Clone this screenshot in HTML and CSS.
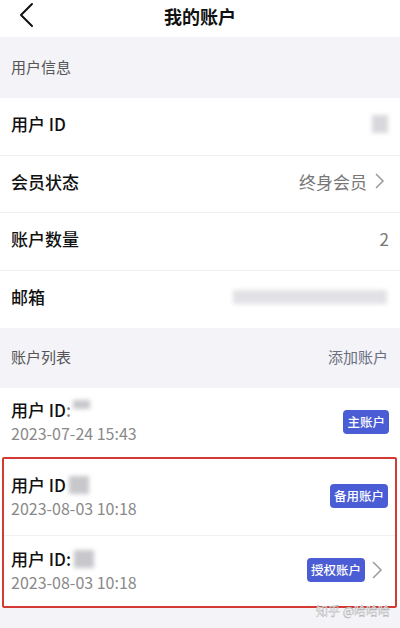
FILE: index.html
```html
<!DOCTYPE html>
<html lang="zh-CN">
<head>
  <meta charset="UTF-8" />
  <meta name="viewport" content="width=device-width, initial-scale=1.0"/>
  <title>我的账户</title>
  <link rel="stylesheet" href="styles.css">
</head>
<body>

  <!-- Top Bar -->
  <div class="top-bar">
    <svg class="back" width="16" height="26" viewBox="0 0 16 26">
      <polyline points="13,2 2,13 13,24" fill="none" stroke="#111" stroke-width="2" stroke-linecap="round" stroke-linejoin="round"/>
    </svg>
    <h3>我的账户</h3>
  </div>

  <!-- User Info -->
  <div class="section-head">用户信息</div>
  <div class="group">
    <div class="row">
      <span class="label">用户 ID</span>
      <span class="blur blur-id"></span>
    </div>
    <div class="row">
      <span class="label">会员状态</span>
      <span class="value">终身会员<svg class="arrow" width="11" height="18" viewBox="0 0 11 18"><polyline points="2,2 9,9 2,16" fill="none" stroke="#999" stroke-width="1.5"/></svg></span>
    </div>
    <div class="row">
      <span class="label">账户数量</span>
      <span class="value">2</span>
    </div>
    <div class="row last">
      <span class="label">邮箱</span>
      <span class="blur blur-mail"></span>
    </div>
  </div>

  <!-- Account List -->
  <div class="section-head list-head">
    <span>账户列表</span>
    <span class="add">添加账户</span>
  </div>
  <div class="group">
    <div class="account first">
      <div class="info">
        <div class="name">用户 ID<span class="colon">:</span><span class="blur blur-small"></span></div>
        <div class="date">2023-07-24 15:43</div>
      </div>
      <span class="badge">主账户</span>
    </div>
    <div class="marked">
      <div class="account">
        <div class="info">
          <div class="name">用户 ID<span class="blur blur-square"></span></div>
          <div class="date">2023-08-03 10:18</div>
        </div>
        <span class="badge">备用账户</span>
      </div>
      <div class="account last">
        <div class="info">
          <div class="name">用户 ID:<span class="blur blur-square"></span></div>
          <div class="date">2023-08-03 10:18</div>
        </div>
        <span class="badge">授权账户</span>
        <svg class="arrow" width="12" height="20" viewBox="0 0 12 20"><polyline points="2,2 10,10 2,18" fill="none" stroke="#999" stroke-width="1.5"/></svg>
      </div>
    </div>
  </div>

  <div class="watermark">知乎 @哈哈哈</div>

</body>
</html>
```

FILE: styles.css
```css
* {
  margin: 0;
  padding: 0;
  box-sizing: border-box;
}

body, html {
  height: 100%;
  font-family: 'Noto Sans CJK SC', 'Noto Sans', sans-serif;
}

body {
  background: #f3f3f8;
  color: #111;
  overflow: hidden;
}

/* Top Bar */
.top-bar {
  height: 37px;
  background: #fff;
  position: relative;
  display: flex;
  justify-content: center;
  align-items: center;
}

.top-bar h3 {
  font-size: 18px;
  font-weight: 700;
  margin-top: -6px;
}

.back {
  position: absolute;
  left: 19px;
  top: 2px;
}

/* Section Headers */
.section-head {
  height: 61px;
  padding: 0 12px 3px 11px;
  display: flex;
  justify-content: space-between;
  align-items: center;
  font-size: 15px;
  color: #555;
}

.list-head {
  height: 60px;
}

.section-head .add {
  color: #6a6f80;
}

.group {
  background: #fff;
}

/* Info Rows */
.row {
  height: 57.5px;
  padding: 0 11px 5px 11px;
  display: flex;
  justify-content: space-between;
  align-items: center;
  border-bottom: 1px solid #f0f0f3;
}

.row.last {
  border-bottom: none;
}

.label {
  font-size: 17px;
  font-weight: 500;
}

.value {
  font-size: 17px;
  color: #777;
  display: flex;
  align-items: center;
}

.value .arrow {
  margin-left: 7px;
  margin-right: 4px;
}

/* Blurred data */
.blur {
  display: inline-block;
  background: #c8c8cc;
  filter: blur(2px);
}

.blur-id {
  width: 16px;
  height: 18px;
  margin-right: 1px;
  background: #d8d8dc;
}

.blur-mail {
  width: 154px;
  height: 14px;
  background: #e2e2e6;
  margin-right: 2px;
}

.blur-small {
  width: 17px;
  height: 9px;
  margin-left: 2px;
  vertical-align: 8px;
}

.blur-square {
  width: 20px;
  height: 18px;
  margin-left: 3px;
  vertical-align: -2px;
}

/* Account List */
.account {
  height: 77px;
  padding: 0 7px 2px 7px;
  display: flex;
  align-items: center;
  border-bottom: 1px solid #f0f0f3;
}

.account.first {
  height: 69px;
  padding: 0 11px 2px 11px;
  border-bottom: none;
}

.account.last {
  height: 70px;
  border-bottom: none;
}

.info {
  flex: 1;
}

.name {
  font-size: 17px;
  font-weight: 500;
  line-height: 24px;
}

.colon {
  color: #888;
}

.date {
  font-size: 16px;
  color: #8a8a8a;
  line-height: 23px;
}

.badge {
  background: #4a5dd4;
  color: #fff;
  font-size: 12.5px;
  font-weight: 500;
  padding: 3px 4px;
  border-radius: 4px;
  line-height: 18px;
}

.account .arrow {
  margin-left: 6px;
  margin-right: 5px;
}

/* Highlight Box */
.marked {
  margin: 0 3px 0 2px;
  border: 2px solid #d33a34;
  border-radius: 2px;
}

.watermark {
  text-align: right;
  padding-right: 10px;
  font-size: 12px;
  color: #fff;
  -webkit-text-stroke: 0.4px #aaa;
  line-height: 14px;
  margin-top: -4px;
}
```
